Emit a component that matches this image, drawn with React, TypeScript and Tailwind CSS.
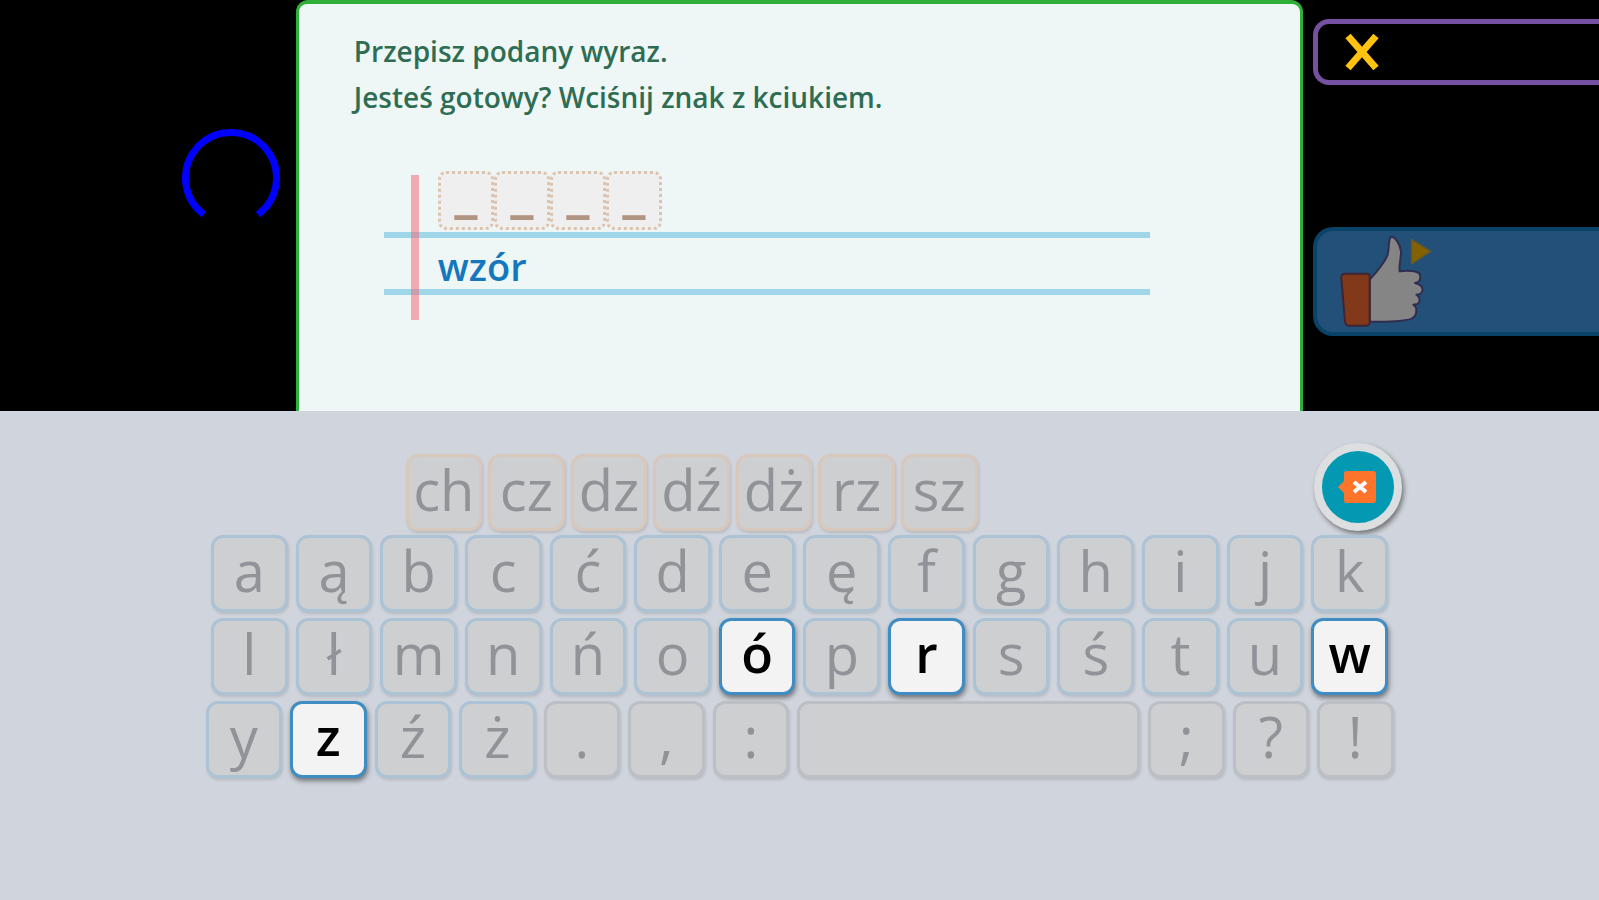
import { useState } from 'react'
import clsx from 'clsx'

type Tone = 'digraph' | 'letter' | 'sign'

const DIGRAPHS = ['ch', 'cz', 'dz', 'dź', 'dż', 'rz', 'sz']
const ROW_ONE = ['a', 'ą', 'b', 'c', 'ć', 'd', 'e', 'ę', 'f', 'g', 'h', 'i', 'j', 'k']
const ROW_TWO = ['l', 'ł', 'm', 'n', 'ń', 'o', 'ó', 'p', 'r', 's', 'ś', 't', 'u', 'w']
const ROW_THREE = ['y', 'z', 'ź', 'ż', '.', ',', ':', ' ', ';', '?', '!']
const SIGNS = ['.', ',', ':', ' ', ';', '?', '!']

const WORD = 'wzór'

const toneClasses: Record<Tone, string> = {
  digraph: 'border-[#d8c8bc]',
  letter: 'border-[#abc3d5]',
  sign: 'border-[#bcc0c5]',
}

interface KeyProps {
  char: string
  tone: Tone
  onPress: (char: string) => void
}

function Key({ char, tone, onPress }: KeyProps) {
  const active = WORD.includes(char)

  return (
    <button
      type="button"
      disabled={!active}
      aria-label={char === ' ' ? 'spacja' : undefined}
      onClick={() => onPress(char)}
      className={clsx(
        'flex h-[77px] items-center justify-center rounded-xl border-3 pb-2 leading-none',
        char === ' ' ? 'w-[343px]' : 'min-w-0 flex-1',
        active
          ? 'border-[#3f8dc3] bg-[#f3f3f3] text-[52px] font-semibold text-black shadow-[1px_3px_5px_rgba(0,0,0,0.45)]'
          : clsx('bg-[#cdcfd1] text-[56px] text-[#909397] shadow-[1px_2px_3px_rgba(0,0,0,0.12)]', toneClasses[tone])
      )}
    >
      {char}
    </button>
  )
}

function Spinner() {
  return (
    <svg className="h-[100px] w-[100px]" viewBox="0 0 100 100" fill="none">
      <path d="M24 86.5A45.5 45.5 0 1 1 78 86.5" stroke="#0000ff" strokeWidth="7" />
    </svg>
  )
}

function ThumbIcon() {
  return (
    <svg className="h-[98px] w-[100px]" viewBox="260 700 300 294">
      <path
        d="M358 840C378 818 402 790 411 768C418 748 412 722 422 711C434 710 449 733 452 755C453 775 445 795 448 815C466 813 494 814 506 820C513 832 512 840 502 848L494 850C508 853 519 862 516 873C514 882 506 885 498 885C510 892 511 907 501 913L489 915C501 922 501 945 488 954C470 968 400 966 358 966Z"
        fill="#858585"
        stroke="#302d50"
        strokeWidth="6"
        strokeLinejoin="round"
      />
      <path
        d="M282 822L352 822Q358 822 358 830V968Q358 978 348 978L296 978Q286 978 284 966L273 838Q271 824 282 822Z"
        fill="#81391a"
        stroke="#3f2635"
        strokeWidth="6"
      />
      <path d="M484 720L540 755L484 792Z" fill="#846200" stroke="#6b5a1c" strokeWidth="5" strokeLinejoin="round" />
    </svg>
  )
}

export default function App() {
  const [typed, setTyped] = useState('')

  const press = (char: string) => setTyped(prev => (prev.length < WORD.length ? prev + char : prev))

  return (
    <div className="flex min-h-screen flex-col overflow-x-hidden bg-[#d0d4dc] font-['Open_Sans','Noto_Sans',sans-serif]">
      <main className="flex bg-black">
        <div className="flex flex-1 justify-end pt-32 pr-4">
          <Spinner />
        </div>

        <section className="w-[63%] rounded-t-xl border-x-3 border-t-4 border-[#2fae3a] bg-[#2fae3a]">
          <div className="rounded-t-lg bg-[#eef7f6] pt-6 pr-[150px] pb-[116px] pl-[55px]">
            <h1 className="text-[28px] leading-[46px] font-semibold text-[#2f6d53]">
              Przepisz podany wyraz.
              <br />
              Jesteś gotowy? Wciśnij znak z kciukiem.
            </h1>

            <div className="relative mt-[51px] ml-[30px]">
              <div className="flex h-[61px] pl-[54px]">
                {WORD.split('').map((_, i) => (
                  <span
                    key={i}
                    className="flex h-[59px] w-14 items-end justify-center rounded-lg border-3 border-dotted border-[#dcc5b0] bg-[#f0efef] pb-1 font-['Roboto',sans-serif] text-[52px] leading-[50px] font-medium text-[#b09482]"
                  >
                    {typed[i] ?? '_'}
                  </span>
                ))}
              </div>
              <p className="h-[63px] border-y-[6px] border-[#a0d6ea] pt-1 pl-[54px] text-[38px] leading-[48px] font-semibold text-[#1577bd]">
                {WORD}
              </p>
              {/* notebook margin */}
              <div className="absolute top-1 left-[27px] h-[145px] w-2 bg-[#f2606e]/50" />
            </div>
          </div>
        </section>

        <aside className="flex w-[18.5%] flex-col items-stretch pt-[19px] pl-2.5">
          <button
            type="button"
            aria-label="Zamknij"
            className="flex h-[66px] items-center rounded-l-2xl border-5 border-r-0 border-[#7651a2] bg-black pl-[26px]"
          >
            <svg className="h-10 w-9" viewBox="0 0 36 40" fill="none">
              <path d="M4 4L32 36M32 4L4 36" stroke="#ffc20e" strokeWidth="7" />
            </svg>
          </button>
          <button
            type="button"
            aria-label="Gotowe"
            className="mt-[142px] flex h-[109px] items-center rounded-l-[20px] border-4 border-r-0 border-[#0a4368] bg-[#235078] pl-5"
          >
            <ThumbIcon />
          </button>
        </aside>
      </main>

      <section className="flex flex-1 flex-col items-center pt-8">
        <div className="flex w-full max-w-[1204px] items-end justify-between pl-[208px]">
          <div className="flex w-[572px] gap-1.5">
            {DIGRAPHS.map(char => (
              <Key key={char} char={char} tone="digraph" onPress={press} />
            ))}
          </div>
          <button
            type="button"
            aria-label="Usuń"
            onClick={() => setTyped(prev => prev.slice(0, -1))}
            className="flex h-[88px] w-[88px] items-center justify-center rounded-full border-8 border-[#dcdee0] bg-[#0499b3] shadow-[2px_3px_5px_rgba(0,0,0,0.45)]"
          >
            <svg className="h-9 w-10" viewBox="0 0 40 36">
              <path
                d="M9 2H35Q38 2 38 5V31Q38 34 35 34H9Q6 34 6 31V24L0 18L6 12V5Q6 2 9 2Z"
                fill="#ff742b"
              />
              <path d="M16 13L28 23M28 13L16 23" stroke="#fff" strokeWidth="4" />
            </svg>
          </button>
        </div>

        <div className="mt-1 flex w-full max-w-[1177px] gap-2">
          {ROW_ONE.map(char => (
            <Key key={char} char={char} tone="letter" onPress={press} />
          ))}
        </div>
        <div className="mt-1.5 flex w-full max-w-[1177px] gap-2">
          {ROW_TWO.map(char => (
            <Key key={char} char={char} tone="letter" onPress={press} />
          ))}
        </div>
        <div className="mt-1.5 flex w-full max-w-[1188px] gap-2">
          {ROW_THREE.map(char => (
            <Key key={char} char={char} tone={SIGNS.includes(char) ? 'sign' : 'letter'} onPress={press} />
          ))}
        </div>
      </section>
    </div>
  )
}
